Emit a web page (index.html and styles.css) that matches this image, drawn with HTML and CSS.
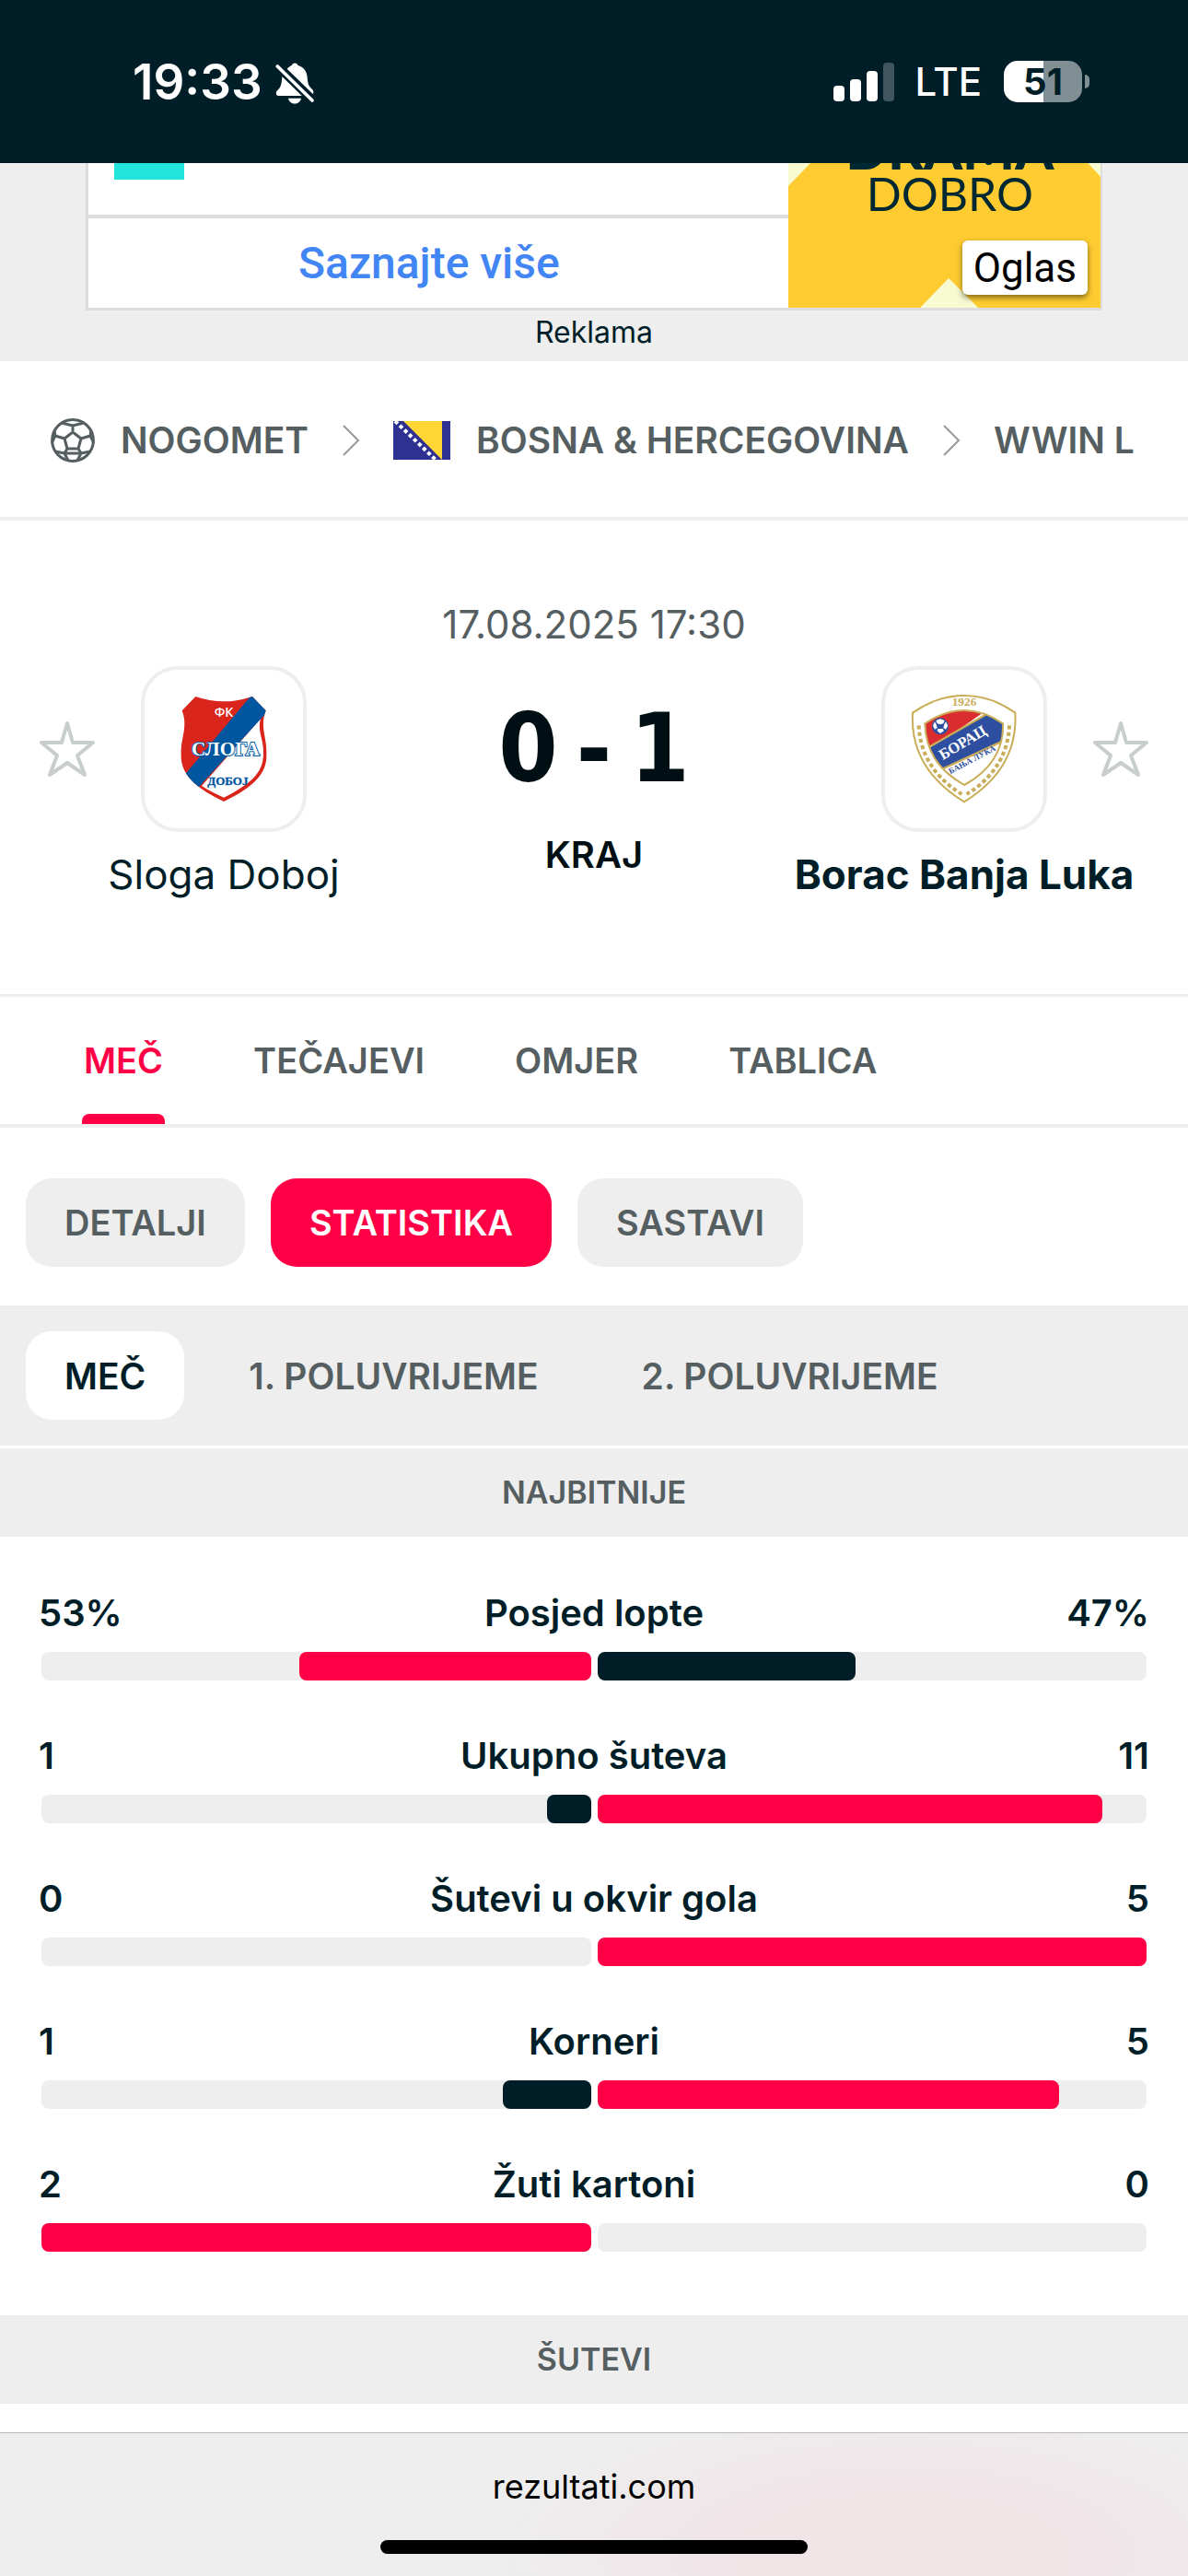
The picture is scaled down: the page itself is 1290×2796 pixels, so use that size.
FILE: index.html
```html
<!DOCTYPE html>
<html lang="hr">
<head>
  <meta charset="UTF-8" />
  <title>Sloga Doboj - Borac Banja Luka | Rezultati</title>
  <meta name="viewport" content="width=device-width, initial-scale=1.0" />
  <link rel="stylesheet" href="styles.css">
</head>
<body>
  <div class="status-bar">
    <div class="status-group">
      <span class="clock">19:33</span>
      <svg class="bell" viewBox="0 0 126 140" fill="#fff">
        <path d="M38 27C44 20 51 17 54 15C57 6 70 6 73 15C92 22 102 34 104 53C105 78 110 85 121 95C125 99 125 106 122 109Z"/>
        <path d="M22 52L94 115H12C2 115 0 105 5 99C17 88 21 78 22 52Z"/>
        <path d="M42 123H84C80 146 46 146 42 123Z"/>
        <path d="M7 19L120 130" stroke="#001e28" stroke-width="26"/>
        <path d="M7 19L120 130" stroke="#fff" stroke-width="11" stroke-linecap="round"/>
      </svg>
    </div>
    <div class="status-group">
      <svg class="signal" viewBox="0 0 66 42" fill="#fff">
        <rect x="0" y="25" width="12" height="17" rx="4"/>
        <rect x="18" y="18" width="12" height="24" rx="4"/>
        <rect x="36" y="9" width="12" height="33" rx="4"/>
        <rect x="54" y="0" width="12" height="42" rx="4" opacity=".25"/>
      </svg>
      <span class="network">LTE</span>
      <span class="battery">51</span>
    </div>
  </div>

  <section class="ad">
    <div class="ad-box">
      <div class="ad-main">
        <div class="ad-top"><span class="ad-block"></span></div>
        <a class="ad-link" href="#">Saznajte više</a>
      </div>
      <div class="ad-side">
        <svg class="ad-shapes" viewBox="0 0 339 157" preserveAspectRatio="none" fill="#f8fad2">
          <path d="M0 0H24L0 25ZM325 0H339V15ZM143 157L174 125L206 157Z"/>
        </svg>
        <span class="ad-drama">DRAMA</span>
        <span class="ad-dobro">DOBRO</span>
        <button class="ad-badge" type="button">Oglas</button>
      </div>
    </div>
    <p class="ad-label">Reklama</p>
  </section>

  <nav class="breadcrumb">
    <svg class="ball" viewBox="0 0 48 48" fill="none" stroke="#555e61" stroke-width="3" stroke-linejoin="round">
      <circle cx="24" cy="24" r="22.400"/>
      <path d="M24 15L33 22L30 33H18L15 22ZM24 15V8M33 22L43 19M30 33L33 38M18 33L15 38M15 22L5 19M12 5L24 8L36 5M44 13L43 19L47 27M4 13L5 19L1 27M5 36L15 38L19 46M43 36L33 38L29 46M15 38H33"/>
    </svg>
    <a href="#">NOGOMET</a>
    <svg class="chevron" viewBox="0 0 20 36"><path d="M2 2L18 18L2 34"/></svg>
    <svg class="flag" viewBox="0 0 62 42">
      <path fill="#2e3192" d="M0 0H62V42H0Z"/>
      <path fill="#ffd633" d="M11 0H53V42Z"/>
      <path fill="none" stroke="#fff" stroke-width="4" stroke-dasharray="4 3" d="M2 0L46 42"/>
    </svg>
    <a href="#">BOSNA &amp; HERCEGOVINA</a>
    <svg class="chevron" viewBox="0 0 20 36"><path d="M2 2L18 18L2 34"/></svg>
    <a class="league" href="#">WWIN L</a>
  </nav>

  <section class="match">
    <div class="team">
      <div class="team-top">
        <button class="star" type="button" aria-label="Prati Sloga Doboj">
          <svg viewBox="0 0 62 62"><path d="M31 3L37 24H59L42 38L50 59L31 46L12 59L20 38L3 24H25Z"/></svg>
        </button>
        <div class="crest">
          <svg viewBox="-5 9 390 420">
            <clipPath id="shield"><path d="M98 48Q190 80 283 48L327 94C305 150 335 190 329 250C323 325 240 365 190 390C140 365 57 325 51 250C45 190 76 150 54 94Z"/></clipPath>
            <g clip-path="url(#shield)">
              <path fill="#da251d" d="M0 0H390V420H0Z"/>
              <path fill="#fff" d="M310 120C297 165 325 190 318 250C310 318 240 350 190 377C165 365 140 354 118 339Z"/>
              <path fill="#0057a0" d="M283 40L335 94L102 350L55 312Z"/>
            </g>
            <text x="190" y="114" font-family="Open Sans" font-size="42" font-weight="600" fill="#fff" text-anchor="middle">ФК</text>
            <text x="196" y="240" font-family="Liberation Serif" font-size="64" font-weight="700" fill="#fff" stroke="#0057a0" stroke-width="6" paint-order="stroke" text-anchor="middle">СЛОГА</text>
            <text x="203" y="337" font-family="Liberation Serif" font-size="39" font-weight="700" fill="#0057a0" stroke="#0057a0" stroke-width="1" text-anchor="middle">ДОБОЈ</text>
          </svg>
        </div>
      </div>
      <a class="team-name" href="#">Sloga Doboj</a>
    </div>

    <div class="result">
      <time class="date">17.08.2025 17:30</time>
      <div class="score"><span>0</span><span>-</span><span>1</span></div>
      <span class="state">KRAJ</span>
    </div>

    <div class="team team-away">
      <div class="team-top">
        <div class="crest">
          <svg viewBox="5 9 390 420">
            <path fill="#fff" stroke="#c9ad58" stroke-width="6" d="M32 101Q112 45 200 45Q288 45 366 101C373 230 308 325 200 391C92 325 25 230 32 101Z"/>
            <clipPath id="inner"><path d="M72 136Q200 50 326 136C330 220 285 290 200 336C110 285 75 220 72 136Z"/></clipPath>
            <g clip-path="url(#inner)">
              <path fill="#fff" d="M60 60H340V340H60Z"/>
              <path fill="#db2d30" d="M60 60H320L60 240Z"/>
              <path fill="#2e4fa0" stroke="#c9ad58" stroke-width="7" d="M60 227L300 90L350 130V182L120 288L60 320Z"/>
            </g>
            <path fill="none" stroke="#c9ad58" stroke-width="6" d="M72 136Q200 50 326 136C330 220 285 290 200 336C110 285 75 220 72 136Z"/>
            <path fill="none" stroke="#c9ad58" stroke-width="12" stroke-dasharray="13 9" d="M52 142C55 230 100 310 192 366M347 142C344 230 300 310 208 366"/>
            <circle cx="122" cy="145" r="27" fill="#2e4fa0"/>
            <path fill="#fff" d="M122 121L136 126L132 136L122 139L112 136L108 126ZM140 130L147 143L140 155L132 150L135 139ZM104 130L98 143L104 155L112 150L109 139ZM112 160L114 153H130L134 160L122 168Z"/>
            <text x="200" y="79" font-family="Liberation Serif" font-size="40" font-weight="700" fill="#c9ad58" text-anchor="middle">1926</text>
            <text transform="translate(130 256) rotate(-31)" font-family="Liberation Serif" font-size="50" font-weight="700" fill="#fff">БОРАЦ</text>
            <text transform="translate(155 301) rotate(-28)" font-family="Liberation Serif" font-size="27" font-weight="700" fill="#2e4fa0">БАЊА ЛУКА</text>
          </svg>
        </div>
        <button class="star" type="button" aria-label="Prati Borac Banja Luka">
          <svg viewBox="0 0 62 62"><path d="M31 3L37 24H59L42 38L50 59L31 46L12 59L20 38L3 24H25Z"/></svg>
        </button>
      </div>
      <a class="team-name winner" href="#">Borac Banja Luka</a>
    </div>
  </section>

  <nav class="tabs">
    <a class="active" href="#">MEČ</a>
    <a href="#">TEČAJEVI</a>
    <a href="#">OMJER</a>
    <a href="#">TABLICA</a>
  </nav>

  <div class="pills">
    <button class="pill" type="button">DETALJI</button>
    <button class="pill selected" type="button">STATISTIKA</button>
    <button class="pill" type="button">SASTAVI</button>
  </div>

  <div class="periods">
    <button class="pill selected" type="button">MEČ</button>
    <button class="pill" type="button">1. POLUVRIJEME</button>
    <button class="pill" type="button">2. POLUVRIJEME</button>
  </div>

  <h2 class="section-title">NAJBITNIJE</h2>
  <div class="stats">
    <div class="stat">
      <div class="stat-text"><span>53%</span><span>Posjed lopte</span><span>47%</span></div>
      <div class="bars">
        <div class="bar home"><div class="fill lead" style="width:53%"></div></div>
        <div class="bar"><div class="fill" style="width:47%"></div></div>
      </div>
    </div>
    <div class="stat">
      <div class="stat-text"><span>1</span><span>Ukupno šuteva</span><span>11</span></div>
      <div class="bars">
        <div class="bar home"><div class="fill" style="width:8%"></div></div>
        <div class="bar"><div class="fill lead" style="width:92%"></div></div>
      </div>
    </div>
    <div class="stat">
      <div class="stat-text"><span>0</span><span>Šutevi u okvir gola</span><span>5</span></div>
      <div class="bars">
        <div class="bar home"></div>
        <div class="bar"><div class="fill lead" style="width:100%"></div></div>
      </div>
    </div>
    <div class="stat">
      <div class="stat-text"><span>1</span><span>Korneri</span><span>5</span></div>
      <div class="bars">
        <div class="bar home"><div class="fill" style="width:16%"></div></div>
        <div class="bar"><div class="fill lead" style="width:84%"></div></div>
      </div>
    </div>
    <div class="stat">
      <div class="stat-text"><span>2</span><span>Žuti kartoni</span><span>0</span></div>
      <div class="bars">
        <div class="bar home"><div class="fill lead" style="width:100%"></div></div>
        <div class="bar"></div>
      </div>
    </div>
  </div>
  <h2 class="section-title">ŠUTEVI</h2>

  <footer class="browser-bar">
    <span>rezultati.com</span>
    <div class="home-indicator"></div>
  </footer>
</body>
</html>
```
FILE: styles.css
```css
* {
  box-sizing: border-box;
}

body {
  margin: 0;
  min-height: 100vh;
  display: flex;
  flex-direction: column;
  background: #fff;
  color: #001e28;
  font-family: Inter, "Liberation Sans", sans-serif;
  font-size: 40px;
}

a {
  color: inherit;
  text-decoration: none;
}

button {
  border: none;
  padding: 0;
  background: none;
  color: inherit;
  font: inherit;
  cursor: pointer;
}

svg {
  display: block;
  flex: none;
}

/* phone status bar */
.status-bar {
  height: 177px;
  padding: 0 115px 0 144px;
  display: flex;
  justify-content: space-between;
  align-items: center;
  background: #001e28;
  color: #fff;
}

.status-group {
  display: flex;
  align-items: center;
  gap: 14px;
}

.clock {
  font-size: 53px;
  font-weight: 600;
}

.bell {
  width: 42px;
  height: 48px;
}

.signal {
  width: 66px;
  height: 42px;
  margin-right: 8px;
}

.network {
  font-size: 42px;
  font-weight: 500;
  margin-right: 10px;
}

.battery {
  position: relative;
  width: 85px;
  height: 45px;
  border-radius: 15px;
  background: linear-gradient(90deg, #fff 51%, #808f94 51%);
  color: #001e28;
  font-size: 40px;
  font-weight: 700;
  line-height: 45px;
  text-align: center;
}

.battery::after {
  content: "";
  position: absolute;
  left: 88px;
  top: 15px;
  width: 5px;
  height: 15px;
  border-radius: 0 8px 8px 0;
  background: #808f94;
}

/* advert */
.ad {
  padding: 0 93px;
  background: #eee;
}

.ad-box {
  display: grid;
  grid-template-columns: 759fr 339fr;
  height: 160px;
  border: solid #ddd;
  border-width: 0 2px 3px 3px;
  background: #fff;
}

.ad-main {
  display: flex;
  flex-direction: column;
}

.ad-top {
  height: 60px;
  padding-left: 28px;
  border-bottom: 4px solid #ddd;
}

.ad-block {
  display: block;
  width: 76px;
  height: 18px;
  background: #24e5dc;
}

.ad-link {
  flex: 1;
  display: flex;
  justify-content: center;
  align-items: center;
  padding-right: 20px;
  color: #4285f4;
  font: 500 48px Roboto, sans-serif;
}

.ad-side {
  position: relative;
  display: flex;
  flex-direction: column;
  align-items: center;
  overflow: hidden;
  background: #fecc30;
  color: #002832;
  font-family: Lato, sans-serif;
}

.ad-shapes {
  position: absolute;
  width: 100%;
  height: 100%;
}

.ad-drama,
.ad-dobro {
  position: relative;
  flex: none;
  margin-left: 12px;
}

.ad-drama {
  margin-top: -44px;
  font-size: 60px;
  font-weight: 900;
  line-height: 56px;
}

.ad-dobro {
  font-size: 50px;
  line-height: 42px;
}

.ad-badge {
  position: absolute;
  right: 14px;
  bottom: 14px;
  height: 59px;
  padding: 0 12px;
  border-radius: 6px;
  background: #fff;
  box-shadow: 0 3px 6px rgba(0, 0, 0, 0.5);
  color: #000;
  font: 44px Roboto, sans-serif;
}

.ad-label {
  margin: 0;
  padding: 3px 0 10px;
  font-size: 32px;
  line-height: 42px;
  text-align: center;
}

/* breadcrumb */
.breadcrumb {
  height: 173px;
  padding: 2px 55px 0;
  display: flex;
  align-items: center;
  border-bottom: 4px solid #eee;
  color: #555e61;
  font-size: 39px;
  font-weight: 600;
  white-space: nowrap;
}

.ball {
  width: 48px;
  height: 48px;
  margin-right: 28px;
}

.chevron {
  width: 20px;
  height: 36px;
  margin: 0 36px;
  fill: none;
  stroke: #999;
  stroke-width: 2;
}

.flag {
  width: 62px;
  height: 42px;
  margin-right: 28px;
}

.league {
  flex: 1;
  overflow: hidden;
}

/* match header */
.match {
  display: grid;
  grid-template-columns: repeat(3, 1fr);
  padding: 85px 42px 100px;
  border-bottom: 3px solid #eee;
}

.team {
  padding-top: 73px;
  text-align: center;
}

.team-top {
  display: grid;
  grid-template-columns: 1fr 180px 1fr;
  align-items: center;
  margin-bottom: 16px;
}

.team-away .crest {
  grid-column: 2;
}

.star {
  width: 62px;
  height: 62px;
}

.team-away .star {
  justify-self: end;
}

.star path {
  fill: none;
  stroke: #c8cdcd;
  stroke-width: 4;
  stroke-linejoin: round;
}

.crest {
  height: 180px;
  display: flex;
  justify-content: center;
  align-items: center;
  border: 4px solid #eee;
  border-radius: 40px;
}

.crest svg {
  width: 130px;
  height: 140px;
}

.team-name {
  font-size: 44px;
  line-height: 60px;
  white-space: nowrap;
}

.winner {
  font-weight: 700;
}

.result {
  display: flex;
  flex-direction: column;
  align-items: center;
}

.date {
  color: #555e61;
  font-size: 42px;
  line-height: 56px;
}

.score {
  display: flex;
  gap: 20px;
  margin: 40px 0 22px;
  color: #000f14;
  font: 700 103px "DejaVu Sans Condensed", "DejaVu Sans", sans-serif;
  line-height: 132px;
}

.state {
  color: #000f14;
  font-weight: 600;
  line-height: 56px;
}

/* tabs */
.tabs {
  display: flex;
  gap: 94px;
  height: 142px;
  padding: 0 89px;
  border-bottom: 4px solid #eee;
  color: #555e61;
  font-size: 38px;
  font-weight: 600;
  line-height: 138px;
}

.tabs a {
  padding: 0 2px;
}

.tabs .active {
  position: relative;
  color: #ff0046;
}

.tabs .active::after {
  content: "";
  position: absolute;
  left: 0;
  right: 0;
  bottom: 0;
  height: 11px;
  border-radius: 8px 8px 0 0;
  background: #ff0046;
}

.pills,
.periods {
  display: flex;
  gap: 28px;
}

.pills {
  padding: 55px 28px 42px;
}

.pill {
  height: 96px;
  padding: 0 42px;
  border-radius: 28px;
  background: #eee;
  color: #555e61;
  font-size: 38px;
  font-weight: 600;
}

.pills .selected {
  background: #ff0046;
  color: #fff;
}

.periods {
  padding: 28px;
  background: #eee;
}

.periods .pill {
  font-size: 39px;
}

.periods .selected {
  background: #fff;
  color: #001e28;
}

/* statistics */
.section-title {
  margin: 3px 0 0;
  background: #eee;
  color: #555e61;
  font-size: 34px;
  font-weight: 600;
  line-height: 96px;
  text-align: center;
}

.stats {
  display: flex;
  flex-direction: column;
  gap: 54px;
  padding: 55px 42px 66px;
}

.stat-text {
  display: grid;
  grid-template-columns: 1fr auto 1fr;
  margin-bottom: 14px;
  font-weight: 600;
  line-height: 56px;
}

.stat-text span:last-child {
  text-align: right;
}

.bars {
  display: flex;
  gap: 7px;
  margin: 0 3px;
}

.bar {
  flex: 1;
  height: 31px;
  border-radius: 8px;
  background: #eee;
}

.home {
  display: flex;
  justify-content: flex-end;
}

.fill {
  height: 100%;
  border-radius: 8px;
  background: #001e28;
}

.lead {
  background: #ff0046;
}

/* browser bottom bar */
.browser-bar {
  margin-top: auto;
  height: 156px;
  padding: 30px 0 24px;
  display: flex;
  flex-direction: column;
  justify-content: space-between;
  align-items: center;
  border-top: 1px solid #b8b8b8;
  background: radial-gradient(ellipse 35% 110% at 76% 85%, #f0e4e7 40%, #eee 100%);
  color: #000;
  font-size: 36px;
  line-height: 56px;
}

.home-indicator {
  width: 36%;
  height: 15px;
  border-radius: 8px;
  background: #000;
}
```
